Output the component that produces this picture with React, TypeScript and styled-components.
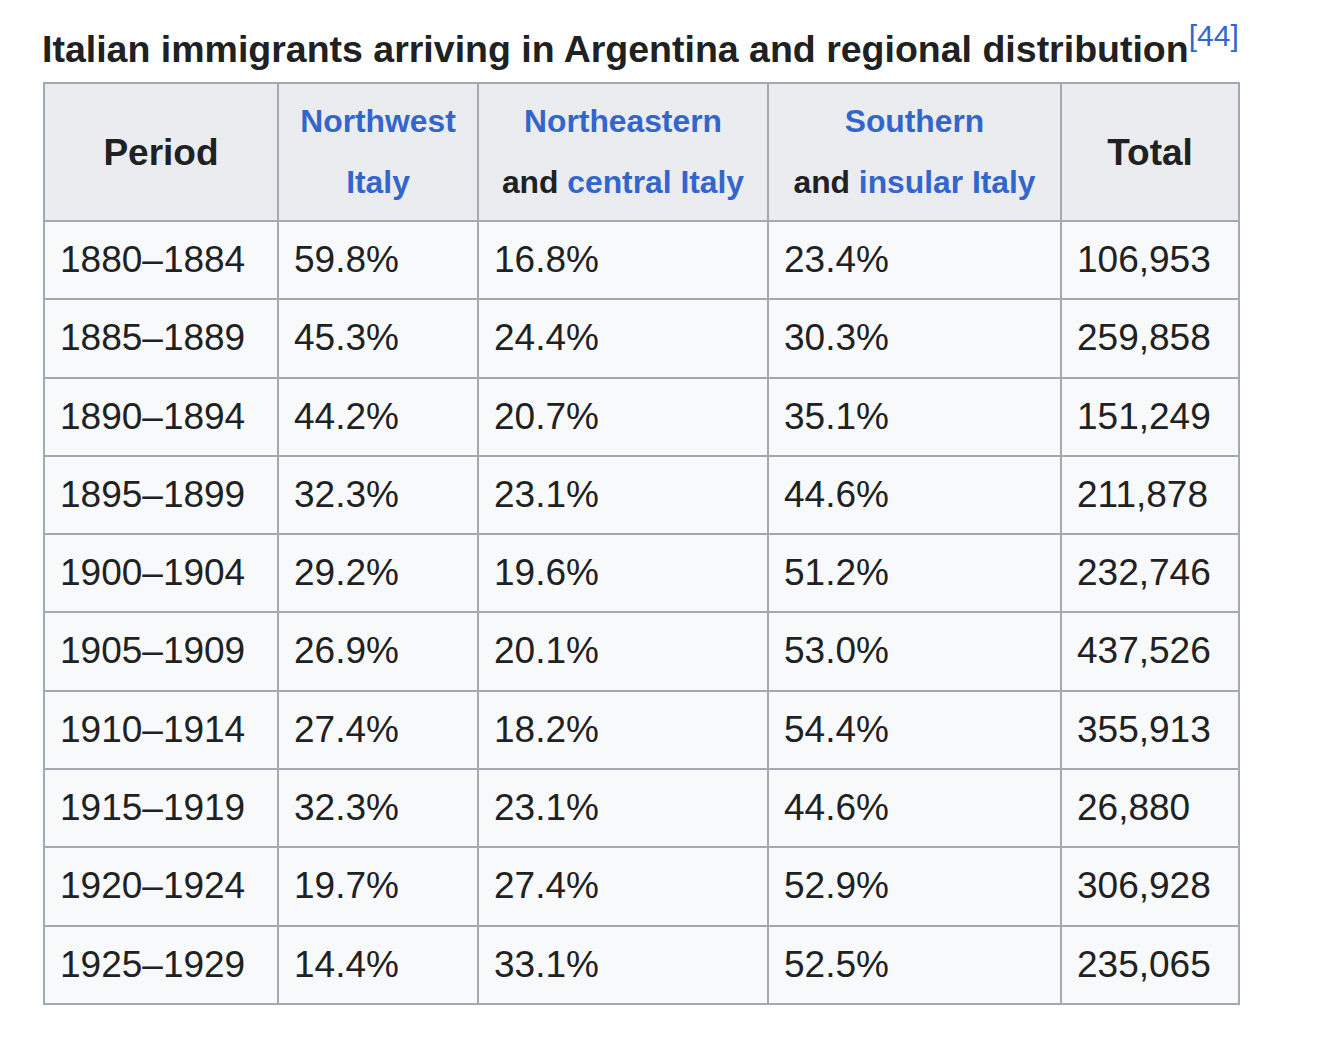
import React from 'react';
import styled, { createGlobalStyle } from 'styled-components';

const GlobalStyle = createGlobalStyle`
    html, body {
        margin: 0;
        padding: 0;
        background: #ffffff;
    }
    body {
        font-family: 'Liberation Sans', Arial, Helvetica, sans-serif;
        color: #202122;
    }
`;

const Page = styled.div`
    padding: 24px 0 0 43px;
`;

const Table = styled.table`
    border-collapse: collapse;
    table-layout: fixed;
    background: #f8f9fa;
    color: #202122;
    font-size: 37px;
`;

const Caption = styled.caption`
    text-align: left;
    white-space: nowrap;
    font-weight: 700;
    font-size: 37.5px;
    line-height: 50px;
    height: 50px;
    padding-bottom: 8px;
    margin-left: -1px;
`;

const Ref = styled.sup`
    font-weight: 400;
    font-size: 80%;
    line-height: 0;
    color: #3366cc;
    vertical-align: 0.55em;
`;

const HeadCell = styled.th<{ $w: number; $small?: boolean }>`
    width: ${(p) => p.$w}px;
    background: #eaecf0;
    border: 2px solid #a2a9b1;
    padding: 7px 15px;
    line-height: 61px;
    font-size: ${(p) => (p.$small ? '31.8px' : '37px')};
    font-weight: 700;
    text-align: center;
    white-space: nowrap;
`;

const Link = styled.span`
    color: #3366cc;
`;

const Cell = styled.td`
    border: 2px solid #a2a9b1;
    padding: 8px 15px 9px 15px;
    line-height: 59.3px;
    text-align: left;
    white-space: nowrap;
`;

const rows: [string, string, string, string, string][] = [
    ['1880–1884', '59.8%', '16.8%', '23.4%', '106,953'],
    ['1885–1889', '45.3%', '24.4%', '30.3%', '259,858'],
    ['1890–1894', '44.2%', '20.7%', '35.1%', '151,249'],
    ['1895–1899', '32.3%', '23.1%', '44.6%', '211,878'],
    ['1900–1904', '29.2%', '19.6%', '51.2%', '232,746'],
    ['1905–1909', '26.9%', '20.1%', '53.0%', '437,526'],
    ['1910–1914', '27.4%', '18.2%', '54.4%', '355,913'],
    ['1915–1919', '32.3%', '23.1%', '44.6%', '26,880'],
    ['1920–1924', '19.7%', '27.4%', '52.9%', '306,928'],
    ['1925–1929', '14.4%', '33.1%', '52.5%', '235,065'],
];

export default function App() {
    return (
        <>
            <GlobalStyle />
            <Page>
                <Table>
                    <Caption>
                        Italian immigrants arriving in Argentina and regional distribution
                        <Ref>[44]</Ref>
                    </Caption>
                    <thead>
                        <tr>
                            <HeadCell $w={202}>Period</HeadCell>
                            <HeadCell $w={168} $small>
                                <Link>Northwest</Link>
                                <br />
                                <Link>Italy</Link>
                            </HeadCell>
                            <HeadCell $w={258} $small>
                                <Link>Northeastern</Link>
                                <br />
                                and <Link>central Italy</Link>
                            </HeadCell>
                            <HeadCell $w={261} $small>
                                <Link>Southern</Link>
                                <br />
                                and <Link>insular Italy</Link>
                            </HeadCell>
                            <HeadCell $w={146}>Total</HeadCell>
                        </tr>
                    </thead>
                    <tbody>
                        {rows.map((r) => (
                            <tr key={r[0]}>
                                {r.map((v, i) => (
                                    <Cell key={i}>{v}</Cell>
                                ))}
                            </tr>
                        ))}
                    </tbody>
                </Table>
            </Page>
        </>
    );
}
